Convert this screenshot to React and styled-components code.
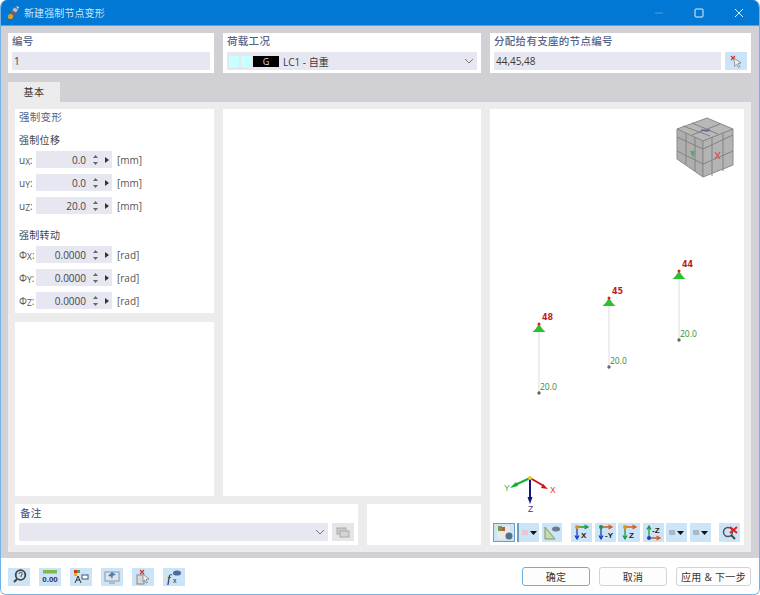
import React from 'react';
import styled, {createGlobalStyle} from 'styled-components';

const GlobalStyle = createGlobalStyle`
  html, body {
    margin: 0;
    padding: 0;
    background: #fff;
  }
  body {
    font-family: "Open Sans", "Noto Sans CJK SC", sans-serif;
    font-size: 10px;
    color: #333;
  }
`;

const Window = styled.div`
  width: 760px;
  height: 595px;
  box-sizing: border-box;
  display: flex;
  flex-direction: column;
  border: 1px solid #74b3e6;
  border-top: 0;
  border-radius: 7px 7px 6px 6px;
  overflow: hidden;
  background: #fff;
`;

const TitleBar = styled.div`
  height: 25px;
  flex: none;
  display: flex;
  align-items: center;
  background: #0078d4;
  border-bottom: 1px solid #5aa5e0;
  padding-left: 6px;
  color: #cfe3f6;
`;

const TitleText = styled.span`
  margin-left: 4px;
  font-size: 10px;
  letter-spacing: 0.1px;
  flex: 1;
`;

const WinButton = styled.div`
  width: 40px;
  display: flex;
  justify-content: center;
  align-items: center;
`;

const Body = styled.div`
  flex: 1;
  display: flex;
  flex-direction: column;
  background: #d1d1d5;
  padding: 7px 8px 6px 7px;
  min-height: 0;
`;

const TopRow = styled.div`
  display: grid;
  grid-template-columns: 206px 258px 261px;
  gap: 9px;
`;

const Card = styled.div`
  background: #fff;
  box-sizing: border-box;
  padding: ${p => p.$pad || '0'};
`;

const GroupLabel = styled.div`
  height: 19px;
  line-height: 17px;
  font-size: 10.5px;
  font-weight: 500;
  color: #56648a;
  letter-spacing: 0.3px;
`;

const Field = styled.div`
  flex: 1;
  height: 18px;
  display: flex;
  align-items: center;
  justify-content: ${p => (p.$end ? 'flex-end' : 'flex-start')};
  background: #e7e7f1;
  padding: 0 3px 0 2px;
  box-sizing: border-box;
  font-size: 10px;
  color: #3a3a3a;
`;

const FieldRow = styled.div`
  display: flex;
  gap: 4px;
`;

const Swatch = styled.span`
  width: 10px;
  height: 11px;
  margin-right: 2px;
  background: #c8ffff;
`;

const ColorTag = styled.span`
  width: 26px;
  height: 11px;
  line-height: 11px;
  margin-right: 4px;
  background: #000;
  color: #ddd;
  text-align: center;
  font-size: 9px;
`;

const ComboText = styled.span`
  flex: 1;
`;

const IconButton = styled.button`
  width: ${p => p.$w || 22}px;
  height: ${p => p.$h || 18}px;
  flex: none;
  padding: 0;
  margin: 0;
  display: flex;
  align-items: center;
  justify-content: center;
  gap: 2px;
  border: 0;
  border-left: ${p => (p.$bracket ? '2px solid #6f9cc0' : '0')};
  box-sizing: border-box;
  background: ${p => (p.$disabled ? '#e6e6e6' : '#cce4f7')};
  outline: ${p => (p.$active ? '1px solid #6f9cc0' : 'none')};
  outline-offset: -1px;
`;

const TabStrip = styled.div`
  display: flex;
  margin-top: 9px;
`;

const Tab = styled.div`
  width: 52px;
  height: 20px;
  line-height: 20px;
  text-align: center;
  background: #ececec;
  font-size: 10px;
  letter-spacing: 0.4px;
  color: #333;
`;

const Panel = styled.div`
  flex: 1;
  display: flex;
  gap: 9px;
  background: #ececec;
  padding: 7px;
  min-height: 0;
`;

const LeftArea = styled.div`
  width: 466px;
  flex: none;
  display: flex;
  flex-direction: column;
  gap: 8px;
`;

const Columns = styled.div`
  flex: 1;
  display: grid;
  grid-template-columns: 199px 258px;
  gap: 9px;
  min-height: 0;
`;

const LeftColumn = styled.div`
  display: grid;
  grid-template-rows: 204px 1fr;
  gap: 9px;
  min-height: 0;
`;

const SectionTitle = styled.div`
  height: 17px;
  line-height: 17px;
  color: #56648a;
  font-size: 10.5px;
  letter-spacing: 0.3px;
`;

const SubTitle = styled.div`
  height: 17px;
  line-height: 17px;
  margin-top: ${p => p.$top || 0}px;
  font-size: 10px;
  letter-spacing: 0.3px;
  color: #444;
`;

const ValueRow = styled.div`
  height: 17px;
  display: flex;
  align-items: center;
  margin-top: 6px;
  ${SubTitle} + & {
    margin-top: 2px;
  }
`;

const AxisLabel = styled.span`
  width: 17px;
  flex: none;
  color: #555;
  font-size: 10px;
  white-space: nowrap;
  sub {
    font-size: 8.5px;
    vertical-align: baseline;
    position: relative;
    top: 1px;
  }
`;

const Spin = styled.div`
  width: 76px;
  height: 17px;
  flex: none;
  display: flex;
  align-items: center;
  background: #e7e7f1;
`;

const SpinValue = styled.span`
  width: 50px;
  text-align: right;
  font-size: 10px;
  color: #444;
`;

const SpinArrows = styled.span`
  margin-left: 6px;
  width: 6px;
  display: flex;
  flex-direction: column;
  align-items: center;
  gap: 4px;
`;

const SpinMenu = styled.svg`
  margin-left: 7px;
`;

const Unit = styled.span`
  margin-left: 5px;
  font-size: 10px;
  color: #555;
`;

const BottomRow = styled.div`
  height: 41px;
  flex: none;
  display: grid;
  grid-template-columns: 343px 114px;
  gap: 9px;
`;

const RemarkLabel = styled(GroupLabel)`
  line-height: 18px;
  padding-left: 1px;
`;

const ViewCard = styled.div`
  width: 254px;
  flex: none;
  display: flex;
  flex-direction: column;
  background: #fff;
  padding-bottom: 3px;
`;

const Scene = styled.svg`
  display: block;
  width: 254px;
  flex: 1;
  min-height: 0;
`;

const Toolbar = styled.div`
  height: 19px;
  flex: none;
  display: flex;
  padding-left: 3px;
`;

const ToolGap = styled.span`
  width: ${p => p.$w}px;
  flex: none;
`;

const Footer = styled.div`
  height: 35px;
  flex: none;
  display: flex;
  align-items: center;
  padding: 1px 8px 0 7px;
  background: #fff;
`;

const FooterTools = styled.div`
  flex: 1;
  display: flex;
  gap: 9px;
`;

const FooterButtons = styled.div`
  display: flex;
  gap: 9px;
`;

const DialogButton = styled.button`
  width: ${p => p.$w}px;
  height: 19px;
  padding: 0;
  box-sizing: border-box;
  background: #fdfdfd;
  border: 1px solid ${p => (p.$primary ? '#6db0e0' : '#d4d4d4')};
  border-radius: 3px;
  font-family: inherit;
  font-size: 10px;
  letter-spacing: 0.3px;
  color: #333;
`;

const Chevron = () => (
    <svg width="10" height="6" viewBox="0 0 10 6">
        <path d="M1 1l4 4 4-4" fill="none" stroke="#777" strokeWidth="1"/>
    </svg>
);

const Caret = () => (
    <svg width="7" height="4" viewBox="0 0 7 4">
        <path d="M0 0h7L3.5 4z" fill="#111"/>
    </svg>
);

const SpinControl = ({value}) => (
    <Spin>
        <SpinValue>{value}</SpinValue>
        <SpinArrows>
            <svg width="5" height="3" viewBox="0 0 5 3"><path d="M2.500 0L5 3H0z" fill="#666"/></svg>
            <svg width="5" height="3" viewBox="0 0 5 3"><path d="M2.500 3L0 0h5z" fill="#666"/></svg>
        </SpinArrows>
        <SpinMenu width="4" height="6" viewBox="0 0 4 6"><path d="M0 0l4 3-4 3z" fill="#333"/></SpinMenu>
    </Spin>
);

const AppIcon = () => (
    <svg width="13" height="15" viewBox="0 0 13 15">
        <path d="M2 9l6-8 4 3-5 8z" fill="#5a6680"/>
        <path d="M7 2.500l4 2-2 3-3.500-2z" fill="#b4bfd4"/>
        <path d="M9 1l3 1-1 2z" fill="#dfe6f2"/>
        <circle cx="3.500" cy="11.500" r="2.600" fill="#dca020"/>
    </svg>
);

const PickIcon = () => (
    <svg width="14" height="14" viewBox="0 0 14 14">
        <path d="M2 2l4 4M6 2L2 6" stroke="#d83030" strokeWidth="1.2"/>
        <path d="M5 4l7 5-3 .6 2 3-1.400.8-1.800-3-2 2z" fill="#eee" stroke="#777" strokeWidth=".7"/>
    </svg>
);

const CopyIcon = () => (
    <svg width="14" height="11" viewBox="0 0 14 11">
        <rect x="1" y="1" width="9" height="6" fill="#ccc" stroke="#aaa"/>
        <rect x="4" y="4" width="9" height="6" fill="#d4d4d4" stroke="#aaa"/>
    </svg>
);

const AxisIcon = ({label, from, to, dot}) => (
    <svg width="19" height="17" viewBox="0 0 19 17">
        <path d="M5 4v10M3 11.500L5 15l2-3.500" fill="none" stroke={to} strokeWidth="1.3"/>
        <path d="M5 3h10M12.500 1L16 3l-3.500 2" fill="none" stroke={from} strokeWidth="1.3"/>
        <circle cx="5" cy="3" r="2" fill={dot}/>
        <text x="9" y="14" fontSize="8" fontWeight="700" fill="#222" fontFamily="Liberation Sans">{label}</text>
    </svg>
);

const ZIcon = () => (
    <svg width="19" height="17" viewBox="0 0 19 17">
        <path d="M5 13V3M3 5.500L5 2l2 3.500" fill="none" stroke="#1d9a3c" strokeWidth="1.3"/>
        <path d="M5 14h10M12.500 12l3.500 2-3.500 2" fill="none" stroke="#e0571c" strokeWidth="1.3"/>
        <circle cx="5" cy="14" r="2" fill="#1540c0"/>
        <text x="8" y="9" fontSize="8" fontWeight="700" fill="#222" fontFamily="Liberation Sans">-Z</text>
    </svg>
);

const SceneIcon = () => (
    <svg width="19" height="17" viewBox="0 0 19 17">
        <rect x="2" y="2" width="13" height="13" fill="#e8e8e8"/>
        <rect x="3" y="2" width="4" height="5" fill="#7a9a40"/>
        <rect x="7" y="3" width="3" height="4" fill="#b05a40"/>
        <circle cx="14" cy="12" r="3.500" fill="#54708a"/>
    </svg>
);

const MeasureIcon = () => (
    <svg width="18" height="17" viewBox="0 0 18 17">
        <path d="M2 15V3l10 12z" fill="#c4dca8" stroke="#7d9a6a"/>
        <ellipse cx="13" cy="5" rx="4" ry="2.500" fill="#6b7b90"/>
    </svg>
);

const NoSearchIcon = () => (
    <svg width="18" height="17" viewBox="0 0 18 17">
        <circle cx="7" cy="8" r="4.500" fill="none" stroke="#555" strokeWidth="1.500"/>
        <path d="M10 11l4 4" stroke="#444" strokeWidth="2"/>
        <path d="M9 3l7 6M16 3L9 9" stroke="#e02020" strokeWidth="2"/>
    </svg>
);

const HelpIcon = () => (
    <svg width="15" height="15" viewBox="0 0 15 15">
        <circle cx="8.500" cy="6" r="4.800" fill="none" stroke="#444" strokeWidth="1.800"/>
        <path d="M5 10l-3 3" stroke="#444" strokeWidth="2.200"/>
        <path d="M7 5a1.600 1.600 0 1 1 2 1.500V8" fill="none" stroke="#444"/>
    </svg>
);

const ZeroIcon = () => (
    <svg width="16" height="16" viewBox="0 0 16 16">
        <rect x="1" y="1" width="14" height="3.500" fill="#82b84e"/>
        <text x="8" y="13" fontSize="8" fontWeight="700" textAnchor="middle" fill="#334" fontFamily="Liberation Sans">0.00</text>
    </svg>
);

const ModelIcon = () => (
    <svg width="16" height="16" viewBox="0 0 16 16">
        <rect x="1" y="1" width="3" height="3" fill="#d93030"/>
        <rect x="4" y="1" width="3" height="3" fill="#58a838"/>
        <rect x="1" y="4" width="3" height="3" fill="#e8b020"/>
        <path d="M5 7l-3 7M5 7l3 7M3 11h4" stroke="#333" fill="none"/>
        <rect x="9" y="6" width="6" height="4" fill="#fff" stroke="#456"/>
    </svg>
);

const ScreenIcon = () => (
    <svg width="16" height="16" viewBox="0 0 16 16">
        <rect x="1" y="3" width="14" height="9" fill="#dfe6ee" stroke="#8996a5"/>
        <path d="M4 7l4-4 4 3-3 .5-1 4-1-3z" fill="#4c7fa8"/>
        <path d="M5 14h6" stroke="#8996a5"/>
    </svg>
);

const PasteIcon = () => (
    <svg width="16" height="16" viewBox="0 0 16 16">
        <rect x="2" y="6" width="7" height="9" fill="#d8d8d8" stroke="#888"/>
        <path d="M5 1l4 4M9 1L5 5" stroke="#d83030" strokeWidth="1.2"/>
        <path d="M8 5l6 5-3 .5 1.500 3-1.500.5-1.500-3-1.500 1.500z" fill="#eee" stroke="#777" strokeWidth=".7"/>
    </svg>
);

const FormulaIcon = () => (
    <svg width="16" height="16" viewBox="0 0 16 16">
        <text x="1" y="14" fontSize="13" fontStyle="italic" fill="#222" fontFamily="Liberation Serif">f</text>
        <text x="7" y="14" fontSize="7" fill="#222" fontFamily="Liberation Sans">x</text>
        <ellipse cx="11" cy="4" rx="4" ry="2.600" fill="#4e6a96"/>
    </svg>
);

const nodes = [
    {id: 48, x: 539, top: 324, base: 332, end: 393},
    {id: 45, x: 609, top: 298, base: 305, end: 367},
    {id: 44, x: 679, top: 271, base: 279, end: 340},
];

const cubeLines = [
    'M692 123l26 11', 'M720 124l-28 11', 'M683 126l27 10',
    'M686 133v31', 'M695 137v34', 'M712 137v39', 'M723 133v38',
    'M677 137l26 12 30-14', 'M677 151l26 13 30-13',
];

const Cube = () => (
    <g>
        <path d="M707 118l26 11-30 12-26-12z" fill="#b8b8b8" stroke="#8a8a8a"/>
        <path d="M677 129l26 12v36l-26-18z" fill="#aeaeae" stroke="#8a8a8a"/>
        <path d="M703 141l30-12v36l-30 12z" fill="#b4b4b4" stroke="#8a8a8a"/>
        {cubeLines.map(d => <path key={d} d={d} stroke="#828282" strokeWidth="1" fill="none"/>)}
        <path d="M701 130l6 1 3-1" stroke="#5866a8" strokeWidth="1.500" fill="none"/>
        <path d="M690 151l3 7 2-7z" fill="#58aa68"/>
        <path d="M715 152l5 7M720 152l-5 7" stroke="#d45050" strokeWidth="1.200"/>
    </g>
);

const Axes = () => (
    <g fontFamily="Liberation Sans" fontSize="8.5">
        <path d="M530 478l-15 7" stroke="#14b030" strokeWidth="2"/>
        <path d="M510 488l6-6 2 4z" fill="#14b030"/>
        <path d="M530 478l14 8" stroke="#c81818" strokeWidth="2"/>
        <path d="M548 489l-7-1 2-4z" fill="#c81818"/>
        <path d="M530 478v20" stroke="#101880" strokeWidth="2"/>
        <path d="M530 504l-2.500-7h5z" fill="#101880"/>
        <circle cx="530" cy="478" r="2" fill="#e8d020"/>
        <text x="504" y="491" fill="#20c040">Y</text>
        <text x="550" y="493" fill="#f03030">X</text>
        <text x="528" y="512" fill="#3838a0">Z</text>
    </g>
);

const ModelScene = () => (
    <Scene viewBox="490 109 254 414" preserveAspectRatio="xMinYMin slice">
        <Cube/>
        {nodes.map(n => (
            <g key={n.id}>
                <line x1={n.x} y1={n.base} x2={n.x} y2={n.end} stroke="#e2e2e2" strokeWidth="1.2"/>
                <path d={`M${n.x} ${n.top}l3.500 5 3 3h-13l3-3z`} fill="#2cc030"/>
                <circle cx={n.x} cy={n.top} r="1.500" fill="#f01818"/>
                <circle cx={n.x} cy={n.end} r="1.700" fill="#666"/>
                <text x={n.x + 3} y={n.top - 4} fontSize="8" fontWeight="700" fill="#b81c24" fontFamily="DejaVu Sans">{n.id}</text>
                <text x={n.x + 1} y={n.end - 3} fontSize="8.500" fill="#2f8f2f" fontFamily="Open Sans">20.0</text>
            </g>
        ))}
        <Axes/>
    </Scene>
);

const ValueLine = ({axis, sub, value, unit}) => (
    <ValueRow>
        <AxisLabel>{axis}<sub>{sub}</sub>:</AxisLabel>
        <SpinControl value={value}/>
        <Unit>{unit}</Unit>
    </ValueRow>
);

const App = () => (
    <Window>
        <GlobalStyle/>
        <TitleBar>
            <AppIcon/>
            <TitleText>新建强制节点变形</TitleText>
            <WinButton>
                <svg width="10" height="2" viewBox="0 0 10 2"><path d="M1 1h8" stroke="#4d9ede"/></svg>
            </WinButton>
            <WinButton>
                <svg width="10" height="10" viewBox="0 0 10 10"><rect x="1" y="1" width="8" height="8" rx="1" fill="none" stroke="#e6f1fa"/></svg>
            </WinButton>
            <WinButton>
                <svg width="10" height="10" viewBox="0 0 10 10"><path d="M1 1l8 8M9 1l-8 8" stroke="#e6f1fa"/></svg>
            </WinButton>
        </TitleBar>
        <Body>
            <TopRow>
                <Card $pad="0 4px 3px">
                    <GroupLabel>编号</GroupLabel>
                    <FieldRow><Field>1</Field></FieldRow>
                </Card>
                <Card $pad="0 4px 3px">
                    <GroupLabel>荷载工况</GroupLabel>
                    <FieldRow>
                        <Field>
                            <Swatch/>
                            <Swatch/>
                            <ColorTag>G</ColorTag>
                            <ComboText>LC1 - 自重</ComboText>
                            <Chevron/>
                        </Field>
                    </FieldRow>
                </Card>
                <Card $pad="0 4px 3px">
                    <GroupLabel>分配给有支座的节点编号</GroupLabel>
                    <FieldRow>
                        <Field>44,45,48</Field>
                        <IconButton><PickIcon/></IconButton>
                    </FieldRow>
                </Card>
            </TopRow>
            <TabStrip><Tab>基本</Tab></TabStrip>
            <Panel>
                <LeftArea>
                    <Columns>
                        <LeftColumn>
                            <Card $pad="0 4px">
                                <SectionTitle>强制变形</SectionTitle>
                                <SubTitle $top={6}>强制位移</SubTitle>
                                <ValueLine axis="u" sub="X" value="0.0" unit="[mm]"/>
                                <ValueLine axis="u" sub="Y" value="0.0" unit="[mm]"/>
                                <ValueLine axis="u" sub="Z" value="20.0" unit="[mm]"/>
                                <SubTitle $top={13}>强制转动</SubTitle>
                                <ValueLine axis="Φ" sub="X" value="0.0000" unit="[rad]"/>
                                <ValueLine axis="Φ" sub="Y" value="0.0000" unit="[rad]"/>
                                <ValueLine axis="Φ" sub="Z" value="0.0000" unit="[rad]"/>
                            </Card>
                            <Card/>
                        </LeftColumn>
                        <Card/>
                    </Columns>
                    <BottomRow>
                        <Card $pad="0 4px">
                            <RemarkLabel>备注</RemarkLabel>
                            <FieldRow>
                                <Field $end><Chevron/></Field>
                                <IconButton $disabled><CopyIcon/></IconButton>
                            </FieldRow>
                        </Card>
                        <Card/>
                    </BottomRow>
                </LeftArea>
                <ViewCard>
                    <ModelScene/>
                    <Toolbar>
                        <IconButton $active $h={19}><SceneIcon/></IconButton>
                        <ToolGap $w={2}/>
                        <IconButton $bracket $h={19}>
                            <svg width="6" height="5" viewBox="0 0 6 5"><rect width="6" height="5" fill="#e6c8d4"/></svg>
                            <Caret/>
                        </IconButton>
                        <ToolGap $w={3}/>
                        <IconButton $w={20} $h={19}><MeasureIcon/></IconButton>
                        <ToolGap $w={9}/>
                        <IconButton $w={21} $h={19}><AxisIcon label="X" from="#1d9a3c" to="#1540c0" dot="#e89018"/></IconButton>
                        <ToolGap $w={3}/>
                        <IconButton $w={21} $h={19}><AxisIcon label="-Y" from="#e0571c" to="#1540c0" dot="#1d9a3c"/></IconButton>
                        <ToolGap $w={2}/>
                        <IconButton $w={22} $h={19}><AxisIcon label="Z" from="#e0571c" to="#1d9a3c" dot="#e89018"/></IconButton>
                        <ToolGap $w={3}/>
                        <IconButton $w={21} $h={19}><ZIcon/></IconButton>
                        <ToolGap $w={2}/>
                        <IconButton $w={21} $h={19}>
                            <svg width="6" height="5" viewBox="0 0 6 5"><rect width="6" height="5" fill="#a8b8c8"/></svg>
                            <Caret/>
                        </IconButton>
                        <ToolGap $w={3}/>
                        <IconButton $w={21} $h={19}>
                            <svg width="6" height="5" viewBox="0 0 6 5"><rect width="6" height="5" fill="#a8b8c8"/></svg>
                            <Caret/>
                        </IconButton>
                        <ToolGap $w={8}/>
                        <IconButton $w={21} $h={19}><NoSearchIcon/></IconButton>
                    </Toolbar>
                </ViewCard>
            </Panel>
        </Body>
        <Footer>
            <FooterTools>
                <IconButton><HelpIcon/></IconButton>
                <IconButton><ZeroIcon/></IconButton>
                <IconButton><ModelIcon/></IconButton>
                <IconButton><ScreenIcon/></IconButton>
                <IconButton><PasteIcon/></IconButton>
                <IconButton><FormulaIcon/></IconButton>
            </FooterTools>
            <FooterButtons>
                <DialogButton $primary $w={68}>确定</DialogButton>
                <DialogButton $w={68}>取消</DialogButton>
                <DialogButton $w={75}>应用 &amp; 下一步</DialogButton>
            </FooterButtons>
        </Footer>
    </Window>
);

export default App;
